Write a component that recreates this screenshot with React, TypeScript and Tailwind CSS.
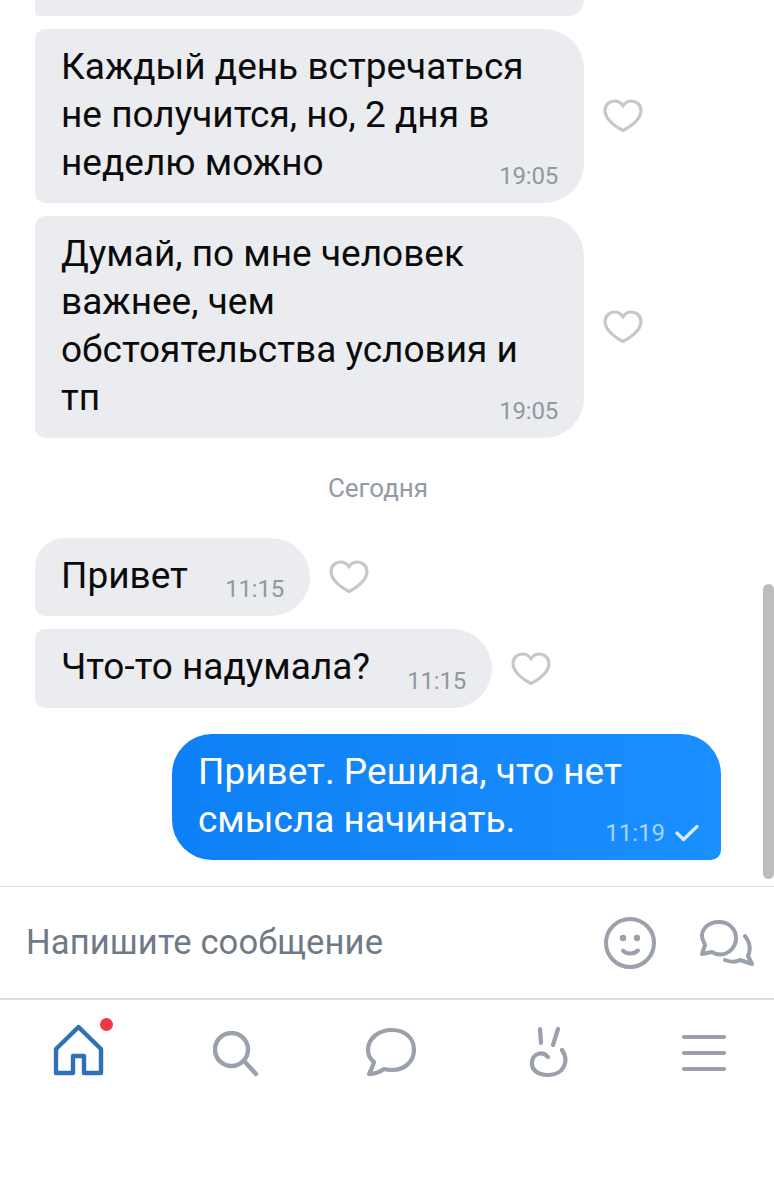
const font = { fontFamily: "Roboto, sans-serif" };

function Heart() {
  return (
    <svg width="40" height="34" viewBox="0 0 40 34" fill="none" stroke="#c4c8cc" strokeWidth="3.2" strokeLinejoin="round">
      <path d="M20 31.5 C17 30 2 22 2 11.5 C2 5.5 7 2 11.5 2 C15 2 18.2 3.8 20 7 C21.8 3.8 25 2 28.5 2 C33 2 38 5.5 38 11.5 C38 22 23 30 20 31.5 Z" />
    </svg>
  );
}

function Incoming({ lines, time, cls }: { lines: string[]; time: string; cls: string }) {
  return (
    <div className="flex items-center">
      <div className={`relative bg-[#ebecf0] text-[#0b0b0c] text-[37px] leading-[48px] pl-[26px] ${cls}`}>
        {lines.map((l) => (
          <div key={l} className="whitespace-nowrap">{l}</div>
        ))}
        <span className="absolute right-[26px] bottom-[13px] text-[24px] leading-[28px] text-[#8f98a3] tracking-[-0.2px]">{time}</span>
      </div>
      <div className="ml-[19px]"><Heart /></div>
    </div>
  );
}

export default function App() {
  return (
    <div className="relative w-[774px] h-[1200px] bg-white overflow-hidden flex flex-col" style={font}>
      <div className="h-[886px] shrink-0 pl-[35px] relative">
        <div className="w-[549px] h-[16px] bg-[#ebecf0] rounded-bl-[8px] rounded-br-[32px]" />
        <div className="mt-[13px] flex flex-col gap-[13px]">
          <Incoming
            cls="w-[549px] h-[174px] pt-[14px] rounded-tl-[10px] rounded-tr-[40px] rounded-br-[40px] rounded-bl-[10px]"
            lines={["Каждый день встречаться", "не получится, но, 2 дня в", "неделю можно"]}
            time="19:05"
          />
          <Incoming
            cls="w-[549px] h-[222px] pt-[14px] rounded-tl-[10px] rounded-tr-[40px] rounded-br-[40px] rounded-bl-[10px]"
            lines={["Думай, по мне человек", "важнее, чем", "обстоятельства условия и", "тп"]}
            time="19:05"
          />
        </div>
        <div className="mt-[35px] mr-[53px] text-center text-[26px] leading-[30px] text-[#939aa3]">Сегодня</div>
        <div className="mt-[35px] flex flex-col gap-[13px]">
          <Incoming
            cls="w-[275px] h-[78px] pt-[14px] rounded-tl-[30px] rounded-bl-[10px] rounded-tr-[40px] rounded-br-[40px]"
            lines={["Привет"]}
            time="11:15"
          />
          <Incoming
            cls="w-[457px] h-[79px] pt-[14px] rounded-tl-[10px] rounded-bl-[10px] rounded-tr-[40px] rounded-br-[40px]"
            lines={["Что-то надумала?"]}
            time="11:15"
          />
        </div>
        <div className="mt-[26px] ml-[137px] relative w-[549px] h-[126px] pl-[26px] pt-[14px] rounded-tl-[40px] rounded-tr-[40px] rounded-bl-[40px] rounded-br-[10px] bg-[linear-gradient(90deg,#0e80f5,#1a8fff)] text-white text-[37px] leading-[48px]">
          <div>Привет. Решила, что нет</div>
          <div>смысла начинать.</div>
          <div className="absolute right-[22px] bottom-[13px] flex items-center gap-[10px] text-[24px] leading-[28px] text-[#a8d4ff]">
            <span>11:19</span>
            <svg width="24" height="18" viewBox="0 0 24 18" fill="none" stroke="#d8ebff" strokeWidth="3.2" strokeLinecap="round" strokeLinejoin="round">
              <path d="M2 9 L8.5 15.5 L22 2.5" />
            </svg>
          </div>
        </div>
        <div className="absolute right-0 top-[584px] w-[11px] h-[295px] rounded-[6px] bg-[#bdbdbd]" />
      </div>

      <div className="h-[114px] shrink-0 border-t-[1px] border-b-[2px] border-[#dcdde0] flex items-center pl-[26px] pr-[20px]">
        <span className="text-[34.6px] text-[#6f7a86] flex-1 tracking-[0.1px]">Напишите сообщение</span>
        <svg width="54" height="54" viewBox="0 0 54 54" fill="none" stroke="#9aa1ab" strokeWidth="4" strokeLinecap="round" className="mr-[41px]">
          <circle cx="27" cy="27" r="24" />
          <circle cx="20" cy="22" r="3.2" fill="#9aa1ab" stroke="none" />
          <circle cx="34" cy="22" r="3.2" fill="#9aa1ab" stroke="none" />
          <path d="M20 34.5 C23 38.5 31 38.5 35 34.5" />
        </svg>
        <svg width="56" height="48" viewBox="0 0 56 48" fill="none" stroke="#9aa1ab" strokeWidth="4" strokeLinecap="round" strokeLinejoin="round">
          <path d="M21 3 C10 3 4 10 4 17 C4 21 6 23 7 26 L4 35 L14 33 C17 35 20 35.5 22 35.5 C31 35.5 38 28 38 19 C38 10 31 3 21 3 Z" />
          <path d="M47 17 C52 23 53 31 50 37 L54 45 L42 41 C38 43 32 43 27 41" />
        </svg>
      </div>

      <div className="flex-1 flex items-start pl-[53px]">
        <div className="relative w-[52px] h-[54px] mt-[23px]">
          <svg width="52" height="54" viewBox="0 0 52 54" fill="none" stroke="#2d72b8" strokeWidth="4.4" strokeLinejoin="round" strokeLinecap="round">
            <path d="M3 50 V26 L25.5 4 L48 26 V50 H31 V33 H20 V50 Z" />
          </svg>
          <span className="absolute left-[47px] -top-[5px] w-[13px] h-[13px] rounded-full bg-[#f0364a]" />
        </div>
        <svg width="48" height="46" viewBox="0 0 48 46" fill="none" stroke="#9aa1ab" strokeWidth="4.4" strokeLinecap="round" className="mt-[31px] ml-[108px]">
          <circle cx="18.5" cy="18.5" r="16.5" />
          <path d="M32 31 L43 43" />
        </svg>
        <svg width="52" height="50" viewBox="0 0 52 50" fill="none" stroke="#9aa1ab" strokeWidth="4.2" strokeLinecap="round" strokeLinejoin="round" className="mt-[27px] ml-[104px]">
          <path d="M27 3 C14 3 3 11 3 23 C3 28 5 32 9 35 C8 39 6 43 4 47 C10 47 15 45 19 42 C22 43 24 43 27 43 C40 43 49 34 49 23 C49 11 40 3 27 3 Z" />
        </svg>
        <svg width="40" height="52" viewBox="0 0 40 52" fill="none" stroke="#9aa1ab" strokeWidth="4.2" strokeLinecap="round" className="mt-[26px] ml-[112px]">
          <path d="M11 3 L12 17" />
          <path d="M29 3 L24 19" />
          <path d="M33 24 C40 34 36 49 19 49 C8 49 2 43 3 36 C4 28 13 24 19 31" />
        </svg>
        <div className="w-[44px] h-[36px] mt-[35px] ml-[113px] flex flex-col justify-between">
          <div className="h-[4px] rounded-full bg-[#9aa1ab]" />
          <div className="h-[4px] rounded-full bg-[#9aa1ab]" />
          <div className="h-[4px] rounded-full bg-[#9aa1ab]" />
        </div>
      </div>
    </div>
  );
}
